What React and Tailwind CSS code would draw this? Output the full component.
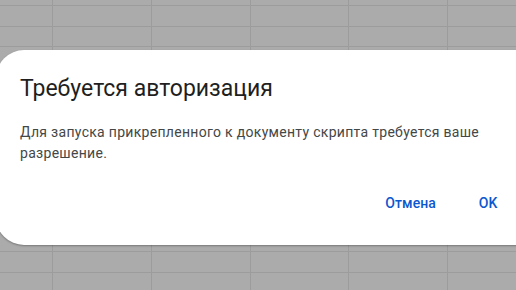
import React from "react";

const rowClasses = [
  "h-[5px]", "h-[20px]", "h-[19px]", "h-[20px]", "h-[19px]", "h-[20px]", "h-[19px]", "h-[20px]",
  "h-[19px]", "h-[20px]", "h-[19px]", "h-[20px]", "h-[19px]", "h-[20px]", "h-[17px]",
];
const colClasses = ["w-[52px]", "w-[98px]", "w-[98px]", "w-[97px]", "w-[98px]", "flex-1"];

export default function App() {
  return (
    <div className="relative w-[516px] h-[290px] overflow-hidden bg-[#ababab]">
      <div className="flex flex-col gap-px bg-[#9c9c9c] h-full">
        {rowClasses.map((rc, i) => (
          <div key={i} className={`flex gap-px ${rc}`}>
            {colClasses.map((cc, j) => (
              <div key={j} className={`${cc} bg-[#ababab]`} />
            ))}
          </div>
        ))}
      </div>

      <div
        className="absolute left-[-4px] top-[50px] w-[548px] h-[195px] bg-white rounded-[28px] shadow-[0_1px_2px_rgba(0,0,0,0.3)] flex flex-col pt-6 px-6 pb-6"
        style={{ fontFamily: "Roboto, 'Open Sans', sans-serif" }}
      >
        <h1 className="text-[23px] leading-[30px] text-[#1f1f1f] font-normal">
          Требуется авторизация
        </h1>
        <p className="mt-[18px] text-[14px] leading-[21px] tracking-[0.3px] text-[#444746] w-[500px]">
          Для запуска прикрепленного к документу скрипта требуется ваше разрешение.
        </p>
        <div className="mt-auto flex justify-end gap-2 translate-y-[2px]">
          <button className="h-10 px-3 text-[14px] font-medium tracking-[0.1px] text-[#0b57d0]">Отмена</button>
          <button className="h-10 min-w-[64px] px-3 text-[14px] font-medium text-[#0b57d0]">OK</button>
        </div>
      </div>
    </div>
  );
}
